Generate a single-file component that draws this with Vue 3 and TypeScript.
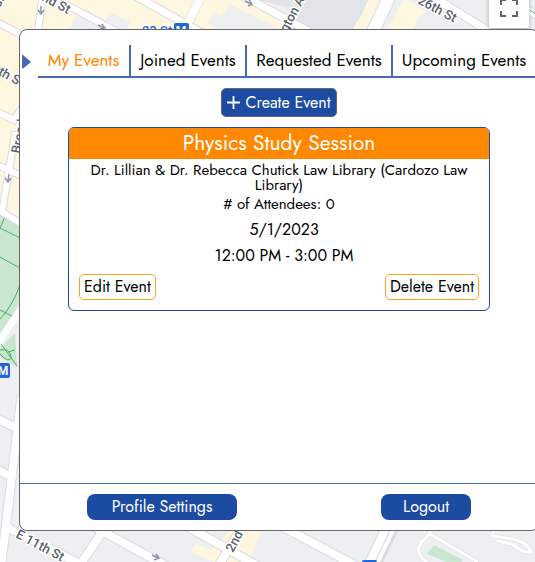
<script setup lang="ts">
import { ref } from 'vue'

interface StudyEvent {
  id: number
  title: string
  place: string
  attendees: number
  date: string
  time: string
}

const tabs: string[] = ['My Events', 'Joined Events', 'Requested Events', 'Upcoming Events']
const activeTab = ref<string>('My Events')

const events = ref<StudyEvent[]>([
  {
    id: 1,
    title: 'Physics Study Session',
    place: 'Dr. Lillian & Dr. Rebecca Chutick Law Library (Cardozo Law Library)',
    attendees: 0,
    date: '5/1/2023',
    time: '12:00 PM - 3:00 PM',
  },
])

function removeEvent(id: number): void {
  events.value = events.value.filter((e) => e.id !== id)
}
</script>

<template>
  <div class="page">
    <svg class="map" viewBox="0 0 535 562" preserveAspectRatio="xMinYMin slice" aria-hidden="true">
      <rect width="535" height="562" fill="#eeeff1" />
      <!-- blocks -->
      <path d="M0 0H270L285 30H70L19 40V222L0 214Z" fill="#fff6e0" />
      <path d="M77 15L83 8L106 20L110 12L130 22L126 32H68Z" fill="#eeeff1" />
      <path d="M222 0L285 32H220L208 22L214 12L222 16L230 6Z" fill="#eeeff1" />
      <path d="M256 0H375L355 30H290L300 10Z" fill="#e1e4e8" />
      <path d="M368 0H392L372 30H352L362 14Z" fill="#fff6e0" />
      <path d="M404 0L386 30H412L420 16L426 12L408 0Z" fill="#fff6e0" />
      <path d="M230 531H262L248 562H215L190 552L196 544L212 550Z" fill="#fff6e0" />
      <!-- park -->
      <path d="M0 212L20 222V312L0 334Z" fill="#c8e6d0" />
      <path d="M0 348L15 333L17 367L0 357Z" fill="#c8e6d0" />
      <g fill="none" stroke="#4bae69" stroke-width="1">
        <path d="M5 217L0 228L20 238M20 285Q12 307 0 319M0 257L20 268M0 310L14 317M1 344L17 366M0 350Q10 348 11 357Q9 364 0 354M8 352L15 350" />
      </g>
      <!-- streets -->
      <g fill="none" stroke="#d8dce2" stroke-linecap="square">
        <path d="M48 -5L123 35M43 -8L38 32M-5 21L20 34M-5 111L14 120L22 108M-5 164L20 175M15 135L2 212L22 224" stroke-width="8" />
        <path d="M132 -6L200 32M202 -5L184 31M236 -8L310 32M430 -5L490 32M500 -5L540 17" stroke-width="9" />
        <path d="M400 -25L372 33" stroke-width="14" />
        <path d="M0 420L21 430M21 400L0 575M0 471L12 477M105 528L75 572M12 530L84 566M100 530L170 568M190 528L265 570M240 530L215 572M285 528L360 568M386 528L365 572M394 528L373 572" stroke-width="10" />
      </g>
      <g fill="none" stroke="#fff" stroke-linecap="square">
        <path d="M43 -8L38 32M48 -5L123 35M-5 21L20 34M-5 111L14 120L22 108M-5 164L20 175M15 135L2 212L22 224" stroke-width="6" />
        <path d="M132 -6L200 32M236 -8L310 32M430 -5L490 32M500 -5L540 17" stroke-width="7" />
        <path d="M202 -5L184 31" stroke-width="8" />
        <path d="M400 -25L372 33" stroke-width="12" />
        <path d="M0 420L21 430M21 400L0 575M0 471L12 477M105 528L75 572M12 530L84 566M100 530L170 568M190 528L265 570M240 530L215 572M285 528L360 568M386 528L365 572" stroke-width="8" />
        <path d="M394 528L373 572" stroke-width="4" />
        <path d="M20 310L0 340" stroke-width="7" />
      </g>
      <path d="M434 545L463 560L457 566L427 554Z" fill="#c8e6d0" />
      <g fill="none" stroke="#dadde1" stroke-width="4">
        <path d="M430 530V534Q416 545 419 552Q421 560 432 565M430 534L478 562M495 529L492 536L513 539Q528 543 531 552Q525 554 512 544L497 541" />
      </g>
      <g fill="none" stroke="#fff" stroke-width="3">
        <path d="M430 530V534Q416 545 419 552Q421 560 432 565M430 534L478 562M495 529L492 536L513 539Q528 543 531 552Q525 554 512 544L497 541" />
      </g>
      <g fill="none" stroke="#8c96b4" stroke-width="1.5">
        <path d="M41 6V13M38 10L41 14L44 10M98 25L104 28M100 29L105 28L102 24M245 1L251 4M248 6L252 4L249 0M9 174L8 181M5 178L8 182L11 178M152 555L158 558M154 560L159 558L156 554" />
      </g>
      <path d="M530 10L536 14" stroke="#4bae69" />
      <!-- street names -->
      <g class="street-name">
        <text x="41" y="0" transform="rotate(28 41 0)">nd St</text>
        <text x="-1" y="9" transform="rotate(-60 -1 9)">St</text>
        <text x="-9" y="71" transform="rotate(28 -9 71)">9th St</text>
        <text x="20" y="154" transform="rotate(-79 20 154)">Broad</text>
        <text x="287" y="33" transform="rotate(-62 287 33)">gton A</text>
        <text x="417" y="3" transform="rotate(28 417 3)">26th St</text>
        <text x="15" y="537" transform="rotate(28 15 537)">E 11th St</text>
        <text x="233" y="553" transform="rotate(-62 233 553)">2nd A</text>
        <text class="station" x="142" y="35">23 St</text>
      </g>
      <rect x="174" y="23" width="15" height="14" rx="2" fill="#1f67dc" />
      <text class="metro" x="181" y="35">M</text>
      <rect x="-5" y="363" width="15" height="15" rx="2" fill="#1f67dc" />
      <text class="metro" x="3" y="375">M</text>
      <rect x="362" y="560" width="15" height="14" rx="2" fill="#1f67dc" />
    </svg>

    <button class="fullscreen" type="button" aria-label="Toggle fullscreen view">
      <svg width="18" height="18" viewBox="0 0 18 18" aria-hidden="true">
        <path d="M0 0H6V2H2V6H0ZM12 0H18V6H16V2H12ZM0 12H2V16H6V18H0ZM16 12H18V18H12V16H16Z" fill="#666" />
      </svg>
    </button>

    <section class="panel">
      <header class="top">
        <button class="collapse" type="button" aria-label="Collapse panel">
          <svg width="9" height="16" viewBox="0 0 9 16" aria-hidden="true">
            <path d="M0 1.5Q0 0.5 1 1L8.5 7.5Q9 8 8.5 8.5L1 14.5Q0 15 0 14Z" fill="#466bb4" />
          </svg>
        </button>
        <nav class="tabs">
          <button
            v-for="tab in tabs"
            :key="tab"
            type="button"
            class="tab"
            :class="{ active: tab === activeTab }"
            @click="activeTab = tab"
          >{{ tab }}</button>
        </nav>
      </header>

      <main class="content">
        <button class="create" type="button">
          <svg width="13" height="13" viewBox="0 0 13 13" aria-hidden="true">
            <path d="M6.5 0.5V12.5M0.5 6.5H12.5" stroke="#fff" stroke-width="1.8" stroke-linecap="round" />
          </svg>
          <span>Create Event</span>
        </button>

        <article v-for="event in events" :key="event.id" class="card">
          <h2 class="title">{{ event.title }}</h2>
          <p class="place">{{ event.place }}</p>
          <p class="attendees"># of Attendees: {{ event.attendees }}</p>
          <div class="when">
            <p>{{ event.date }}</p>
            <p>{{ event.time }}</p>
          </div>
          <div class="actions">
            <button class="outline" type="button">Edit Event</button>
            <button class="outline" type="button" @click="removeEvent(event.id)">Delete Event</button>
          </div>
        </article>
      </main>

      <footer class="bottom">
        <button class="solid wide" type="button">Profile Settings</button>
        <button class="solid" type="button">Logout</button>
      </footer>
    </section>
  </div>
</template>

<style>
body {
  margin: 0;
}
</style>

<style scoped>
.page {
  position: relative;
  box-sizing: border-box;
  min-height: 100vh;
  padding: 29px 0 31px 19px;
  overflow: hidden;
  font-family: Jost, Lato, sans-serif;
  font-size: 16px;
  color: #000;
}

button {
  font: inherit;
  color: inherit;
  margin: 0;
  padding: 0;
  border: 0;
  background: none;
  cursor: pointer;
  white-space: nowrap;
}

.map {
  position: absolute;
  inset: 0;
  width: 100%;
  height: 100%;
}

.street-name {
  font-family: Roboto, sans-serif;
  font-size: 13px;
  font-weight: 500;
  fill: #5b616b;
  stroke: #fff;
  stroke-width: 3px;
  paint-order: stroke;
}

.street-name .station {
  fill: #1f67dc;
}

.metro {
  font-family: Roboto, sans-serif;
  font-size: 12px;
  font-weight: 700;
  fill: #fff;
  text-anchor: middle;
}

.fullscreen {
  position: absolute;
  top: -12px;
  right: 6px;
  display: grid;
  place-items: center;
  width: 40px;
  height: 40px;
  background: #fff;
  border-radius: 2px;
  box-shadow: 0 1px 4px rgba(0, 0, 0, 0.3);
}

.panel {
  position: relative;
  display: flex;
  flex-direction: column;
  box-sizing: border-box;
  min-height: calc(100vh - 60px);
  margin-right: -4px;
  background: #fff;
  border: 1px solid #666;
  border-radius: 8px;
}

.top {
  display: flex;
  align-items: center;
  padding-top: 15px;
}

.collapse {
  display: flex;
  padding-left: 2px;
  width: 18px;
}

.tabs {
  flex: 1;
  display: grid;
  grid-template-columns: 93fr 116fr 146fr 145fr;
  border-bottom: 2px solid #466bb4;
}

.tab {
  height: 31px;
  padding-bottom: 2px;
  border-right: 2px solid #466bb4;
  font-size: 17px;
}

.tab:last-child {
  padding-right: 3px;
  border-right: 0;
}

.tab.active {
  color: #ff8800;
}

.content {
  flex: 1;
  display: flex;
  flex-direction: column;
  align-items: center;
  gap: 10px;
  padding: 10px 48px;
}

.create {
  display: flex;
  align-items: center;
  justify-content: center;
  gap: 5px;
  box-sizing: border-box;
  width: 116px;
  height: 29px;
  color: #fff;
  background: #1c4ba2;
  border: 1px solid #666;
  border-radius: 5px;
}

.card {
  box-sizing: border-box;
  width: 100%;
  border: 1px solid #1c4ba2;
  border-radius: 6px;
  overflow: hidden;
  text-align: center;
}

.title {
  margin: 0;
  font-size: 21px;
  font-weight: 400;
  line-height: 31px;
  color: #fff;
  background: #ff8800;
}

.place,
.attendees,
.when p {
  margin: 0;
}

.place {
  padding: 4px 16px 0;
  font-size: 15px;
  line-height: 15px;
}

.attendees {
  font-size: 15px;
  line-height: 23px;
}

.when {
  padding: 1px 0 0 10px;
  line-height: 26px;
}

.actions {
  display: flex;
  justify-content: space-between;
  padding: 5px 10px 10px;
}

.outline {
  box-sizing: border-box;
  height: 26px;
  padding: 0 4px 2px;
  background: #fff;
  border: 1px solid #ffa01e;
  border-radius: 5px;
}

.bottom {
  display: flex;
  align-items: center;
  justify-content: space-between;
  padding: 10px 67px;
  border-top: 1px solid #466bb4;
}

.solid {
  min-width: 90px;
  height: 26px;
  padding-bottom: 2px;
  color: #fff;
  background: #1c4ba2;
  border-radius: 8px;
}

.solid.wide {
  min-width: 150px;
}
</style>
